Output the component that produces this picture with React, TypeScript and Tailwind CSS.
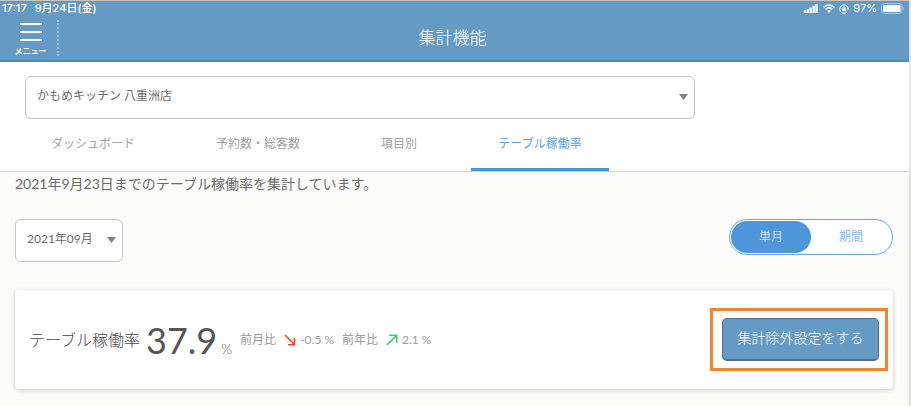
import clsx from "clsx";
import { useState } from "react";

const TABS = [
  { id: "dashboard", label: "ダッシュボード" },
  { id: "reservation", label: "予約数・総客数" },
  { id: "item", label: "項目別" },
  { id: "table", label: "テーブル稼働率" },
];

const PERIODS = ["単月", "期間"];

export default function App() {
  const [tab, setTab] = useState("table");
  const [period, setPeriod] = useState("単月");

  return (
    <div className="min-h-screen border-t border-r-2 border-t-[#c6c4be] border-r-[#e4e4e5] bg-[#fcfcfa] font-['Lato','Noto_Sans_CJK_JP',sans-serif] text-[#6c6c6c]">
      <header className="h-[61px] border-b-2 border-[#5788af] bg-[#649ac4] text-white">
        <StatusBar />
        <div className="grid h-11 grid-cols-3 items-center pr-1">
          <div className="flex items-center">
            <button
              type="button"
              className="flex w-[57px] flex-col items-center gap-1 pt-1 pl-1"
            >
              <svg width="24" height="18" viewBox="0 0 24 18" aria-hidden="true">
                <path d="M1 1h22M1 9h22M1 17h22" stroke="#fff" strokeWidth="2" />
              </svg>
              <span className="text-[8px] leading-[12px] font-bold">メニュー</span>
            </button>
            <span className="h-9 border-l-2 border-dotted border-[#9fc1dc]" />
          </div>
          <h1 className="text-center text-[17px] leading-6 font-light">集計機能</h1>
        </div>
      </header>

      <div className="border-b border-[#d3d3d3] bg-white pt-[14px]">
        <div className="pr-[214px] pl-[25px]">
          <Dropdown label="店舗" options={["かもめキッチン 八重洲店"]} />
        </div>
        <div role="tablist" className="flex gap-[3px] pl-6">
          {TABS.map((t) => (
            <button
              key={t.id}
              type="button"
              role="tab"
              aria-selected={tab === t.id}
              onClick={() => setTab(t.id)}
              className={clsx(
                "h-[52px] w-[138px] border-b-3 text-xs first:mr-6",
                tab === t.id
                  ? "border-[#4a94da] text-[#5c9fde]"
                  : "border-transparent text-[#a0a0a0]",
              )}
            >
              {t.label}
            </button>
          ))}
        </div>
      </div>

      <main className="pr-4 pb-4 pl-[15px]">
        <p className="pt-[2px] text-sm leading-5">
          2021年9月23日までのテーブル稼働率を集計しています。
        </p>

        <div className="mt-[25px] flex items-start justify-between">
          <div className="w-[108px]">
            <Dropdown label="対象月" options={["2021年09月"]} />
          </div>
          <div className="flex h-9 w-[164px] rounded-full border border-[#6ba5dd] bg-white p-px">
            {PERIODS.map((p) => (
              <button
                key={p}
                type="button"
                aria-pressed={period === p}
                onClick={() => setPeriod(p)}
                className={clsx(
                  "flex-1 rounded-full text-xs font-light",
                  period === p ? "bg-[#4d96d9] text-white" : "text-[#4d96d9]",
                )}
              >
                {p}
              </button>
            ))}
          </div>
        </div>

        <section className="mt-7 flex h-[99px] items-center justify-between rounded-sm bg-white pr-[5px] pl-[14px] shadow-[0_1px_4px_rgba(0,0,0,0.22)]">
          <div className="flex items-center">
            <h2 className="text-base font-light text-[#444]">テーブル稼働率</h2>
            <p className="ml-1.5 flex items-baseline gap-1">
              <span className="text-4xl text-[#555]">37.9</span>
              <span className="text-sm font-light">%</span>
            </p>
            <dl className="ml-2 flex items-center text-xs text-[#999]">
              <dt>前月比</dt>
              <dd className="mr-2 ml-2 flex items-center gap-1">
                <TrendArrow down />
                -0.5 %
              </dd>
              <dt>前年比</dt>
              <dd className="ml-2 flex items-center gap-1">
                <TrendArrow />
                2.1 %
              </dd>
            </dl>
          </div>
          <div className="border-3 border-[#ef8636] py-[7px] pr-[6px] pl-[9px]">
            <button
              type="button"
              className="block h-[43px] w-[157px] rounded-[5px] border border-b-2 border-[#4d7090] bg-[#649ac4] pb-0.5 text-sm font-light text-white"
            >
              集計除外設定をする
            </button>
          </div>
        </section>
      </main>
    </div>
  );
}

function StatusBar() {
  return (
    <div className="flex h-[15px] items-center justify-between pr-1 pl-[2px] font-['Inter','Noto_Sans_CJK_JP',sans-serif] text-[11px] font-medium">
      <div className="flex gap-2">
        <span>17:17</span>
        <span>9月24日(金)</span>
      </div>
      <div className="flex items-center gap-1">
        <svg width="16" height="9" viewBox="0 0 16 10" fill="#fff" aria-hidden="true">
          <rect x="0" y="7" width="2.6" height="3" rx=".4" />
          <rect x="3.2" y="5.5" width="2.6" height="4.5" rx=".4" />
          <rect x="6.4" y="4" width="2.6" height="6" rx=".4" />
          <rect x="9.6" y="2" width="2.6" height="8" rx=".4" />
          <rect x="12.8" y="0" width="2.6" height="10" rx=".4" />
        </svg>
        <svg width="12" height="9" viewBox="0 0 12 9" fill="none" stroke="#fff" aria-hidden="true">
          <path d="M.6 3.3C3.7.2 8.3.2 11.4 3.3M2.6 5.3c2-1.9 4.8-1.9 6.8 0" strokeWidth="1.6" />
          <path d="M6 9 4.1 7.1c1.1-1 2.7-1 3.8 0z" fill="#fff" stroke="none" />
        </svg>
        <svg width="10" height="10" viewBox="0 0 10 10" fill="none" stroke="#fff" aria-hidden="true">
          <path d="M8.3 7.7A4.2 4.2 0 1 1 9.2 5" />
          <path d="M7.8 4.6 9.2 6.2l.8-1.8z" fill="#fff" stroke="none" />
          <rect x="3.2" y="4.5" width="3.6" height="2.7" fill="#fff" stroke="none" />
          <path d="M3.9 4.7v-.8a1.1 1.1 0 0 1 2.2 0v.8" strokeWidth=".8" />
        </svg>
        <span className="font-normal">97%</span>
        <svg width="24" height="11" viewBox="0 0 24 11" aria-hidden="true">
          <rect x=".5" y=".5" width="20.5" height="10" rx="3" fill="none" stroke="#a9c8e0" />
          <rect x="2" y="2" width="17.5" height="7" rx="1.5" fill="#fff" />
          <path d="M22 3.8c1.6.6 1.6 2.8 0 3.4z" fill="#a9c8e0" />
        </svg>
      </div>
    </div>
  );
}

function Dropdown({ label, options }: { label: string; options: string[] }) {
  return (
    <div className="relative">
      <select
        aria-label={label}
        className="block h-[43px] w-full appearance-none rounded-md border border-[#c4c4c4] bg-white pr-6 pb-[3px] pl-[11px] text-xs"
      >
        {options.map((o) => (
          <option key={o}>{o}</option>
        ))}
      </select>
      <svg
        width="9"
        height="6"
        viewBox="0 0 9 6"
        className="pointer-events-none absolute top-[18px] right-[7px]"
        aria-hidden="true"
      >
        <path d="M0 0h9L4.5 6z" fill="#828282" />
      </svg>
    </div>
  );
}

function TrendArrow({ down = false }: { down?: boolean }) {
  return (
    <svg
      width="12"
      height="12"
      viewBox="0 0 12 12"
      fill="none"
      stroke={down ? "#ee4b2b" : "#3fc66c"}
      strokeWidth="1.6"
      aria-hidden="true"
    >
      {down ? (
        <path d="M1 1l9.5 9.5M10.5 4v6.7H4" />
      ) : (
        <path d="M1 11l9.5-9.5M3 1.3h7.7V8.5" />
      )}
    </svg>
  );
}
